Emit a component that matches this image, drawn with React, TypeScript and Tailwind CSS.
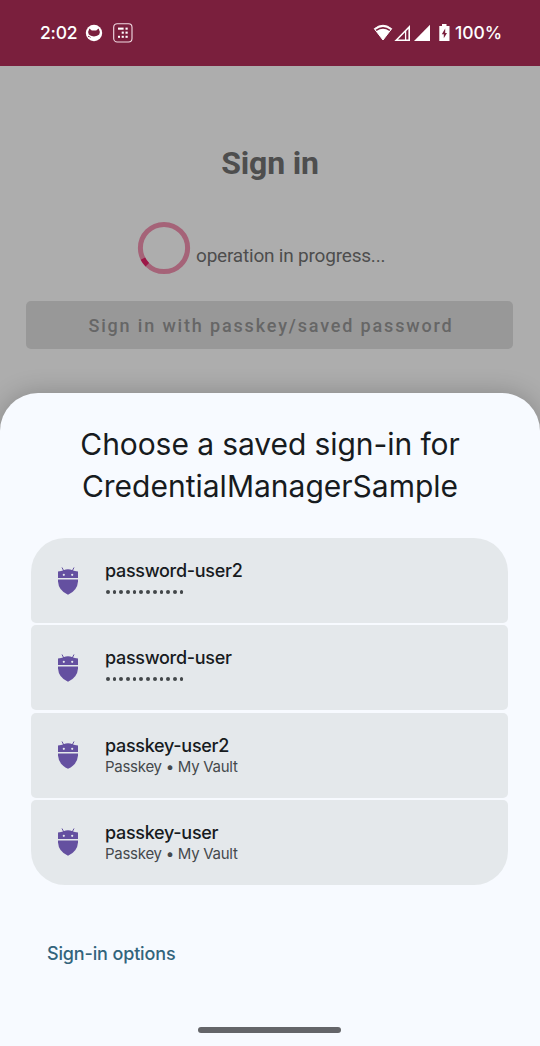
import React from "react";

type Credential = { name: string; detail?: string };

const credentials: Credential[] = [
  { name: "password-user2" },
  { name: "password-user" },
  { name: "passkey-user2", detail: "Passkey • My Vault" },
  { name: "passkey-user", detail: "Passkey • My Vault" },
];

function StatusBar() {
  return (
    <header className="flex h-[66px] shrink-0 items-center bg-[#7a1f3d] pr-[38px] pl-10 font-['Inter',sans-serif] text-[17.5px] font-medium text-white">
      <span className="w-[45px] tracking-[-0.2px]">2:02</span>
      <svg width="18" height="18" viewBox="0 0 18 18" className="shrink-0">
        <circle cx="9" cy="9" r="8.2" fill="white" />
        <path d="M4.4 4.6L6.8 6.4H11.2L13.6 4.6Q15.6 7.8 14.2 10.6Q12.6 12.4 9 12.4Q5.4 12.4 3.8 10.6Q2.4 7.8 4.4 4.6Z" fill="#7a1f3d" />
        <path d="M3 12.4Q4.4 12 5.4 13.6" fill="none" stroke="#7a1f3d" strokeWidth=".9" />
      </svg>
      <svg width="20" height="20" viewBox="0 0 20 20" className="ml-[10px] shrink-0">
        <rect x=".7" y=".7" width="18.3" height="18.3" rx="3.5" fill="none" stroke="#f2dce4" strokeWidth="1.1" />
        <g fill="white">
          <rect x="5" y="4.6" width="5.6" height="2.1" />
          <rect x="12.5" y="4.6" width="2.2" height="2.1" />
          <rect x="8.7" y="8.6" width="2.1" height="2.1" />
          <rect x="12.5" y="8.6" width="2.2" height="2.1" />
          <rect x="5" y="12.8" width="2" height="2" />
          <rect x="8.7" y="12.8" width="2.1" height="2" />
          <rect x="12.5" y="12.8" width="2.2" height="2" />
        </g>
      </svg>
      <div className="ml-auto flex items-center">
        <svg width="20" height="18" viewBox="0 0 20 18">
          <path d="M1.3 4.7Q10-2.2 18.7 4.7L10 16Z" fill="white" stroke="white" strokeWidth="1" strokeLinejoin="round" />
          <path d="M3.1 6.4Q10 1.4 16.9 6.4" fill="none" stroke="#7a1f3d" strokeWidth="1.6" />
        </svg>
        <svg width="17" height="18" viewBox="0 0 17 18" className="ml-[1px]">
          <path d="M2.2 16.2L15.2 3V16.2Z" fill="none" stroke="white" strokeWidth="1.6" />
          <path d="M11.6 7V16" stroke="white" strokeWidth="1.3" />
        </svg>
        <svg width="17" height="18" viewBox="0 0 17 18" className="ml-[3px]">
          <path d="M0 17L16 .8V17Z" fill="white" />
        </svg>
        <svg width="11" height="18" viewBox="0 0 11 18" className="ml-2">
          <path d="M3 0H7.5V2H10.5V17H.3V2H3Z" fill="white" />
          <path d="M6.2 4.5L2.8 10.2H4.8V14.2L8 8.9H6.2Z" fill="#7a1f3d" />
        </svg>
        <span className="ml-[5px] w-[47px] whitespace-nowrap tracking-[0px]">100%</span>
      </div>
    </header>
  );
}

function Spinner() {
  return (
    <svg width="54" height="54" viewBox="0 0 54 54" className="shrink-0">
      <circle cx="27" cy="27" r="23.6" fill="none" stroke="#a56378" strokeWidth="5" />
      <path d="M5.9 37.6A23.6 23.6 0 0 0 10.3 43.7" fill="none" stroke="#9d1747" strokeWidth="5" />
    </svg>
  );
}

function VaultIcon() {
  return (
    <svg width="22" height="28" viewBox="0 0 22 28" className="shrink-0">
      <g fill="#6450a0">
        <path d="M1 4.4Q4.5 4.2 6.5 3.3Q11 1.4 15.5 3.3Q17.5 4.2 21 4.4V11H1Z" />
        <path d="M1 12.4H21V14.5Q20.4 23.6 11 27.8Q1.6 23.6 1 14.5Z" />
      </g>
      <path d="M5 .5L7 4.4M17 .5L15 4.4" stroke="#6450a0" strokeWidth="1" />
      <circle cx="6.8" cy="7.8" r="1.1" fill="#e4e8eb" />
      <circle cx="15.2" cy="7.8" r="1.1" fill="#e4e8eb" />
    </svg>
  );
}

function MaskedPassword() {
  return (
    <div className="mt-[7px] ml-[1px] flex gap-[3px]">
      {Array.from({ length: 12 }, (_, i) => (
        <span key={i} className="h-[3.7px] w-[3.7px] rounded-full bg-[#43474a]" />
      ))}
    </div>
  );
}

export default function App() {
  return (
    <main className="flex h-[1046px] w-[540px] flex-col overflow-hidden bg-[#adadad] font-['Roboto',sans-serif]">
      <StatusBar />
      <section className="flex h-[327px] shrink-0 flex-col">
        <h1 className="mt-[76px] text-center text-[32px] leading-[42px] font-bold tracking-[-0.2px] text-[#4e4e4e]">Sign in</h1>
        <div className="mt-[37px] ml-[137px] flex h-[54px] items-center gap-[5px]">
          <Spinner />
          <span className="mt-[15px] text-[19px] leading-6 tracking-[-0.2px] whitespace-nowrap text-[#4d4d4d]">operation in progress...</span>
        </div>
        <div className="mt-[26px] ml-[26px] flex h-12 w-[487px] items-center justify-center rounded-[5px] bg-[#989898] pl-[3px] text-[18px] font-medium tracking-[1.84px] whitespace-nowrap text-[#666666]">
          Sign in with passkey/saved password
        </div>
      </section>
      <section className="flex flex-1 flex-col rounded-t-[38px] bg-[#f7faff] shadow-[0_0_24px_rgba(0,0,0,0.22)]">
        <h2 className="mt-[30px] text-center font-['Inter',sans-serif] text-[30px] leading-[42px] text-[#171b20]">
          <span className="block tracking-[-0.08px]">Choose a saved sign-in for</span>
          <span className="block tracking-[0px]">CredentialManagerSample</span>
        </h2>
        <ul className="mt-[31px] ml-[31px] flex w-[477px] flex-col gap-[2.3px] overflow-hidden rounded-[34px] font-['Inter',sans-serif]">
          {credentials.map((item) => (
            <li key={item.name} className="flex h-[85px] items-start rounded-[5px] bg-[#e4e8eb] pl-[26px]">
              <div className="mt-[28.6px]">
                <VaultIcon />
              </div>
              <div className="mt-[21px] ml-[26px]">
                <div className="text-[18px] leading-6 font-medium tracking-[-0.3px] whitespace-nowrap text-[#171b1e]">
                  {item.name}
                </div>
                {item.detail ? (
                  <div className="-mt-[0.6px] text-[15px] leading-5 tracking-[-0.27px] whitespace-nowrap text-[#45494c]">{item.detail}</div>
                ) : (
                  <MaskedPassword />
                )}
              </div>
            </li>
          ))}
        </ul>
        <button className="mt-[57px] ml-[47px] self-start font-['Inter',sans-serif] text-[18px] leading-6 font-medium tracking-[-0.15px] whitespace-nowrap text-[#33647c]">
          Sign-in options
        </button>
        <div className="mt-auto mb-[13px] ml-[198px] h-[6px] w-[143px] rounded-full bg-[#646569]" />
      </section>
    </main>
  );
}
